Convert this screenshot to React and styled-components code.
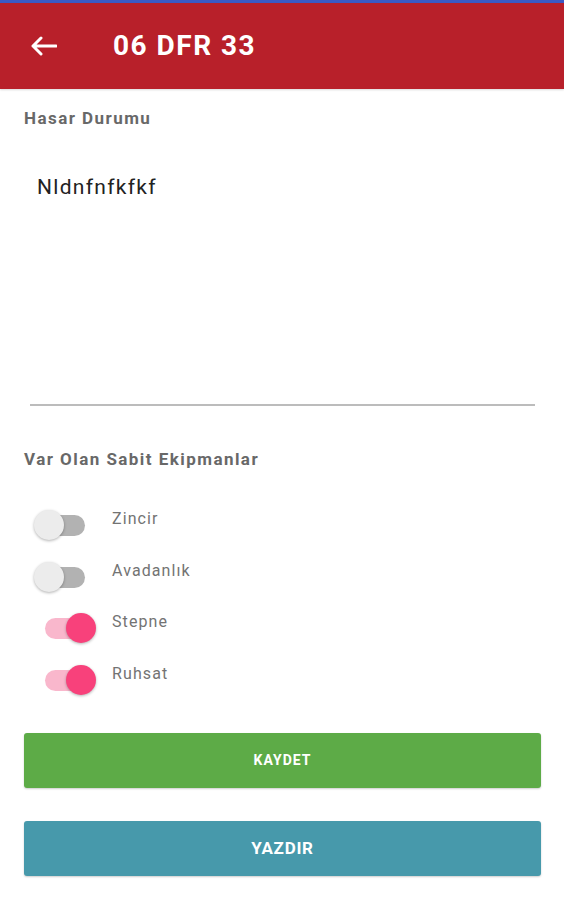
import React, { useState } from 'react';
import styled, { createGlobalStyle } from 'styled-components';

const GlobalStyle = createGlobalStyle`
  body {
    margin: 0;
    background: #ffffff;
    font-family: Roboto, "Liberation Sans", Arial, sans-serif;
  }
`;

const equipment = [
  { name: 'Zincir', on: false },
  { name: 'Avadanlık', on: false },
  { name: 'Stepne', on: true },
  { name: 'Ruhsat', on: true },
];

function BackArrow() {
  return (
    <svg width="27" height="20" viewBox="0 0 27 20">
      <path
        d="M26 10 H3 M11 2 L3 10 L11 18"
        fill="none"
        stroke="#ffffff"
        strokeWidth="3"
        strokeLinecap="round"
        strokeLinejoin="round"
      />
    </svg>
  );
}

function Switch({ on, onToggle }) {
  return (
    <SwitchBox onClick={onToggle}>
      <Track on={on ? 1 : 0} />
      <Thumb on={on ? 1 : 0} />
    </SwitchBox>
  );
}

export default function App() {
  const [items, setItems] = useState(equipment);

  const toggle = (i) =>
    setItems(items.map((it, idx) => (idx === i ? { ...it, on: !it.on } : it)));

  return (
    <Page>
      <GlobalStyle />
      <Header>
        <BackArrow />
        <Title>06 DFR 33</Title>
      </Header>
      <Content>
        <SectionLabel top={19}>Hasar Durumu</SectionLabel>
        <TextField>Nldnfnfkfkf</TextField>
        <SectionLabel top={43}>Var Olan Sabit Ekipmanlar</SectionLabel>
        <SwitchList>
          {items.map((it, i) => (
            <SwitchRow key={it.name}>
              <Switch on={it.on} onToggle={() => toggle(i)} />
              <SwitchLabel>{it.name}</SwitchLabel>
            </SwitchRow>
          ))}
        </SwitchList>
        <Button bg="#5dab47" size={14} spacing={1} top={17}>KAYDET</Button>
        <Button bg="#4799ab" size={17} spacing={0.7} top={33}>YAZDIR</Button>
      </Content>
    </Page>
  );
}

const Page = styled.div`
  border-top: 3px solid #3b5ac6;
  min-height: 897px;
`;

const Header = styled.div`
  height: 86px;
  background: #b8202a;
  display: flex;
  align-items: center;
  padding-left: 30px;
  gap: 56px;
  box-shadow: 0 1px 2px rgba(0, 0, 0, 0.15);
`;

const Title = styled.h1`
  margin: 0;
  color: #ffffff;
  font-size: 28px;
  font-weight: 700;
  line-height: 32px;
  letter-spacing: 1.5px;
`;

const Content = styled.div`
  padding: 0 23px 0 24px;
  display: flex;
  flex-direction: column;
`;

const SectionLabel = styled.div`
  margin-top: ${(p) => p.top}px;
  font-size: 17px;
  line-height: 20px;
  font-weight: 700;
  letter-spacing: 1.45px;
  color: #686868;
`;

const TextField = styled.div`
  margin: 47px 6px 0 6px;
  padding-left: 7px;
  height: 231px;
  box-sizing: border-box;
  border-bottom: 2px solid #bcbcbc;
  font-size: 21px;
  line-height: 24px;
  letter-spacing: 1.3px;
  color: #222222;
`;

const SwitchList = styled.div`
  margin-top: 40px;
  display: flex;
  flex-direction: column;
`;

const SwitchRow = styled.div`
  height: 51.67px;
  display: flex;
  align-items: flex-start;
  padding-left: 9px;
`;

const SwitchBox = styled.div`
  position: relative;
  width: 64px;
  height: 34px;
  flex-shrink: 0;
  cursor: pointer;
`;

const Track = styled.div`
  position: absolute;
  top: 6px;
  left: ${(p) => (p.on ? 12 : 2)}px;
  width: 50px;
  height: 21px;
  border-radius: 11px;
  background: ${(p) => (p.on ? '#f9b7cc' : '#b2b2b2')};
`;

const Thumb = styled.div`
  position: absolute;
  top: 1px;
  left: ${(p) => (p.on ? 33 : 1)}px;
  width: 30px;
  height: 30px;
  border-radius: 50%;
  background: ${(p) => (p.on ? '#f8417b' : '#ececec')};
  box-shadow: 0 1px 3px rgba(0, 0, 0, 0.3);
`;

const SwitchLabel = styled.span`
  margin-left: 15px;
  font-size: 16px;
  line-height: 20px;
  letter-spacing: 1.1px;
  color: #737373;
`;

const Button = styled.button`
  margin-top: ${(p) => p.top}px;
  height: 55px;
  width: 100%;
  border: none;
  border-radius: 3px;
  background: ${(p) => p.bg};
  color: #ffffff;
  font-family: Roboto, "Liberation Sans", Arial, sans-serif;
  font-size: ${(p) => p.size}px;
  font-weight: 700;
  letter-spacing: ${(p) => p.spacing}px;
  box-shadow: 0 1px 2px rgba(0, 0, 0, 0.2);
  cursor: pointer;
`;
